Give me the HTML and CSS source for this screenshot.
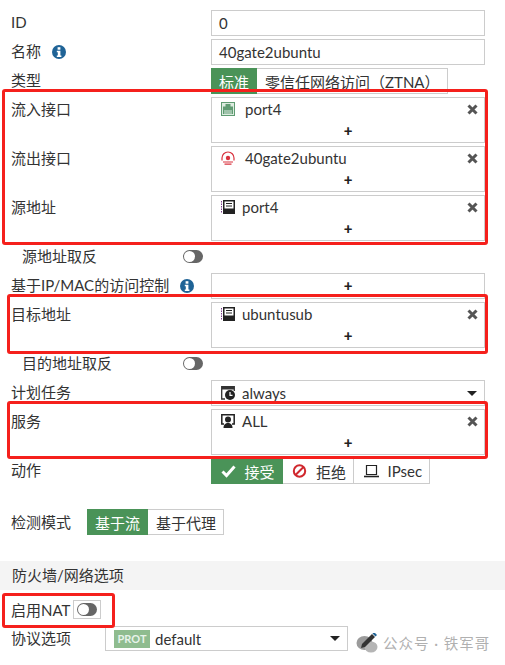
FILE: index.html
```html
<!DOCTYPE html>
<html lang="zh">

<head>
  <meta charset="UTF-8">
  <title>policy</title>
  <link rel="stylesheet" href="styles.css">
</head>

<body>
  <div class="form">
    <div class="row">
      <label class="name">ID</label>
      <div class="field text">0</div>
    </div>
    <div class="row">
      <label class="name">名称
        <svg class="info" viewBox="0 0 14 14"><circle cx="7" cy="7" r="7" fill="#1f6396"/><rect x="5.600" y="2.200" width="2.800" height="2.500" fill="#fff"/><path d="M4.800 5.800h3.600v4.600h1v1.500H4.800v-1.500h1V7.300H4.800z" fill="#fff"/></svg>
      </label>
      <div class="field text">40gate2ubuntu</div>
    </div>
    <div class="row">
      <label class="name">类型</label>
      <div class="btns">
        <span class="btn on">标准</span>
        <span class="btn">零信任网络访问（ZTNA）</span>
      </div>
    </div>

    <div class="row">
      <label class="name">流入接口</label>
      <div class="field multi">
        <div class="entry">
          <svg class="ico" viewBox="0 0 14 14"><rect x=".5" y=".5" width="13" height="13" fill="#dcebdf" stroke="#5f9b72"/><path d="M2 12V4.500h2.500V2h5v2.500H12V12z" fill="#5f9b72"/><path d="M4 8v4M6 8v4M8 8v4M10 8v4" stroke="#fff" stroke-width=".8"/></svg>
          <span class="val wide">port4</span>
          <svg class="x" viewBox="0 0 11 11"><path d="M1.500 1.500l8 8M9.500 1.500l-8 8" stroke="#555" stroke-width="3"/></svg>
        </div>
        <div class="plus">+</div>
      </div>
    </div>
    <div class="row">
      <label class="name">流出接口</label>
      <div class="field multi">
        <div class="entry">
          <svg class="ico" viewBox="0 0 14 14"><path d="M1 9.500V7a6 6 0 0 1 12 0v2.500" fill="none" stroke="#d9333f" stroke-width="1.200"/><circle cx="7" cy="7" r="2.200" fill="#d9333f"/><path d="M2 11h10M3.500 13.200h7" stroke="#d9333f" stroke-width="1.200"/></svg>
          <span class="val wide">40gate2ubuntu</span>
          <svg class="x" viewBox="0 0 11 11"><path d="M1.500 1.500l8 8M9.500 1.500l-8 8" stroke="#555" stroke-width="3"/></svg>
        </div>
        <div class="plus">+</div>
      </div>
    </div>
    <div class="row">
      <label class="name">源地址</label>
      <div class="field multi">
        <div class="entry">
          <svg class="ico" viewBox="0 0 14 14"><path d="M2 0h12v14H2z" fill="#222"/><path d="M3.500 1.500h9v7h-9z" fill="#fff"/><path d="M5 3.500h6M5 6h6" stroke="#222" stroke-width="1"/><path d="M.5 1v12" stroke="#7a3b8c" stroke-width="1" stroke-dasharray="1.500 1"/></svg>
          <span class="val">port4</span>
          <svg class="x" viewBox="0 0 11 11"><path d="M1.500 1.500l8 8M9.500 1.500l-8 8" stroke="#555" stroke-width="3"/></svg>
        </div>
        <div class="plus">+</div>
      </div>
    </div>

    <div class="row switch-row">
      <label class="name sub">源地址取反</label>
      <span class="toggle"></span>
    </div>
    <div class="row">
      <label class="name">基于IP/MAC的访问控制
        <svg class="info" viewBox="0 0 14 14"><circle cx="7" cy="7" r="7" fill="#1f6396"/><rect x="5.600" y="2.200" width="2.800" height="2.500" fill="#fff"/><path d="M4.800 5.800h3.600v4.600h1v1.500H4.800v-1.500h1V7.300H4.800z" fill="#fff"/></svg>
      </label>
      <div class="field plus-only"><div class="plus">+</div></div>
    </div>
    <div class="row">
      <label class="name">目标地址</label>
      <div class="field multi">
        <div class="entry">
          <svg class="ico" viewBox="0 0 14 14"><path d="M2 0h12v14H2z" fill="#222"/><path d="M3.500 1.500h9v7h-9z" fill="#fff"/><path d="M5 3.500h6M5 6h6" stroke="#222" stroke-width="1"/><path d="M.5 1v12" stroke="#7a3b8c" stroke-width="1" stroke-dasharray="1.500 1"/></svg>
          <span class="val">ubuntusub</span>
          <svg class="x" viewBox="0 0 11 11"><path d="M1.500 1.500l8 8M9.500 1.500l-8 8" stroke="#555" stroke-width="3"/></svg>
        </div>
        <div class="plus">+</div>
      </div>
    </div>
    <div class="row switch-row">
      <label class="name sub">目的地址取反</label>
      <span class="toggle"></span>
    </div>
    <div class="row">
      <label class="name">计划任务</label>
      <div class="field text select">
        <svg class="ico" viewBox="0 0 14 14"><path d="M4 13H.7V.7h12.600V5" fill="none" stroke="#333" stroke-width="1.300"/><path d="M1 1h12v2.500H1z" fill="#333"/><circle cx="9" cy="9" r="5" fill="#222"/><path d="M9 6v3.300h2.500" fill="none" stroke="#fff" stroke-width="1.200"/></svg>
        <span class="val">always</span><span class="caret"></span>
      </div>
    </div>
    <div class="row">
      <label class="name">服务</label>
      <div class="field multi">
        <div class="entry">
          <svg class="ico" viewBox="0 0 14 14"><path d="M3 10H.8V.8h12.400V10H11" fill="none" stroke="#222" stroke-width="1.500"/><circle cx="7" cy="5.500" r="3" fill="#222"/><path d="M2.500 14c0-3.500 2-5 4.500-5s4.500 1.500 4.500 5z" fill="#222"/></svg>
          <span class="val">ALL</span>
          <svg class="x" viewBox="0 0 11 11"><path d="M1.500 1.500l8 8M9.500 1.500l-8 8" stroke="#555" stroke-width="3"/></svg>
        </div>
        <div class="plus">+</div>
      </div>
    </div>

    <div class="row action-row">
      <label class="name">动作</label>
      <div class="btns">
        <span class="btn on icon-btn"><svg class="mark" viewBox="0 0 15 14"><path d="M1.500 7.500l4 4 8-9" fill="none" stroke="#fff" stroke-width="3"/></svg>接受</span>
        <span class="btn icon-btn"><svg class="mark" viewBox="0 0 15 14"><circle cx="7.500" cy="7" r="5.700" fill="none" stroke="#d0282e" stroke-width="2"/><path d="M3.500 11l8-8" stroke="#d0282e" stroke-width="2"/></svg>拒绝</span>
        <span class="btn icon-btn"><svg class="mark" viewBox="0 0 15 14"><path d="M2.500 1.500h10v9h-10z" fill="none" stroke="#222" stroke-width="1.200"/><path d="M0 12.500h15" stroke="#222" stroke-width="1.600"/></svg>IPsec</span>
      </div>
    </div>

    <div class="row mode-row">
      <label class="name short">检测模式</label>
      <div class="btns">
        <span class="btn on">基于流</span>
        <span class="btn">基于代理</span>
      </div>
    </div>

    <div class="section">防火墙/网络选项</div>

    <div class="row nat-row">
      <label class="name tight">启用NAT</label>
      <span class="toggle-box"><span class="toggle"></span></span>
    </div>
    <div class="row proto-row">
      <label class="name short">协议选项</label>
      <div class="field text select proto">
        <span class="prot">PROT</span>
        <span class="val">default</span><span class="caret"></span>
      </div>
    </div>
  </div>

  <div class="mark-box box-a"></div>
  <div class="mark-box box-b"></div>
  <div class="mark-box box-c"></div>
  <div class="mark-box box-d"></div>

  <div class="watermark">
    <svg class="wechat" viewBox="0 0 22 20"><ellipse cx="8.500" cy="10" rx="8" ry="7" fill="#9b9b9b"/><ellipse cx="15" cy="14" rx="6.500" ry="5.500" fill="#b5b5b5"/><path d="M6 11l-1 4 4-1L19 4l-3-3z" fill="#333"/><path d="M16.500 .5l3 3L21 2l-3-3z" fill="#1f6396"/></svg>
    <span>公众号 · 铁军哥</span>
  </div>
</body>

</html>
```

FILE: styles.css
```css
html, body {
  margin: 0;
  padding: 0;
  background: #fff;
}

body {
  position: relative;
  width: 505px;
  height: 665px;
  overflow: hidden;
  font-family: Lato, "Noto Sans CJK SC", sans-serif;
  font-size: 15px;
  color: #333;
}

.form {
  padding-top: 10px;
}

.row {
  display: flex;
  margin-bottom: 3px;
}

.name {
  display: block;
  flex: none;
  box-sizing: border-box;
  width: 211px;
  padding-left: 11px;
  line-height: 24px;
  white-space: nowrap;
}

.name.sub {
  padding-left: 22px;
}

.name.short {
  width: 87px;
}

.name.tight {
  width: 73px;
}

.info {
  width: 14px;
  height: 14px;
  margin-left: 7px;
  vertical-align: -2px;
}

.field {
  box-sizing: border-box;
  width: 274px;
  border: 1px solid #ccc;
  background: #fff;
}

.text {
  display: flex;
  align-items: center;
  height: 26px;
  padding-left: 7px;
}

.multi {
  height: 46px;
}

.entry {
  display: flex;
  align-items: center;
  height: 22px;
  padding-left: 9px;
}

.ico {
  flex: none;
  width: 14px;
  height: 14px;
}

.val {
  margin-left: 7px;
}

.val.wide {
  margin-left: 10px;
}

.x {
  flex: none;
  width: 11px;
  height: 11px;
  margin-left: auto;
  margin-right: 6px;
}

.plus {
  height: 21px;
  line-height: 21px;
  text-align: center;
  font-weight: 900;
  color: #222;
}

.plus-only .plus {
  height: 24px;
  line-height: 23px;
}

.select {
  padding-left: 9px;
}

.caret {
  margin-left: auto;
  margin-right: 7px;
  border-top: 5px solid #222;
  border-left: 5px solid transparent;
  border-right: 5px solid transparent;
}

.btns {
  display: flex;
}

.btn {
  display: flex;
  align-items: center;
  box-sizing: border-box;
  height: 26px;
  padding: 0 7px 0 8px;
  border: 1px solid #ccc;
  border-left: 0;
  white-space: nowrap;
}

.btn.on {
  background: #4a9358;
  border-color: #4a9358;
  color: #fff;
}

.icon-btn {
  padding: 0 7px 0 9.5px;
}

.mark {
  flex: none;
  width: 15px;
  height: 14px;
  margin-right: 9px;
}

.switch-row {
  align-items: center;
  box-sizing: border-box;
  height: 26px;
  padding-bottom: 2px;
}

.name.sub + .toggle {
  margin-left: -28px;
}

.toggle {
  position: relative;
  display: block;
  flex: none;
  box-sizing: border-box;
  width: 20px;
  height: 13px;
  border-radius: 7px;
  background: #666;
}

.toggle::before {
  content: "";
  position: absolute;
  left: 1px;
  top: 1px;
  width: 11px;
  height: 11px;
  border-radius: 50%;
  background: #fff;
}

.action-row {
  margin-bottom: 25px;
}

.mode-row {
  margin-bottom: 26px;
}

.mode-row .name {
  line-height: 26px;
}

.section {
  height: 29px;
  padding-left: 12px;
  line-height: 29px;
  background: #f4f4f4;
}

.nat-row {
  align-items: center;
  height: 19px;
  margin: 10px 0 7px;
}

.toggle-box {
  display: flex;
  align-items: center;
  justify-content: center;
  box-sizing: border-box;
  width: 28px;
  height: 19px;
  border: 1px solid #ccc;
}

.proto-row .name {
  width: 105px;
}

.proto {
  width: 243px;
  height: 25px;
  padding-left: 8px;
}

.prot {
  flex: none;
  width: 36px;
  height: 18px;
  line-height: 18px;
  text-align: center;
  font-size: 11px;
  font-weight: 700;
  color: #e8f3ea;
  background: #8fbc8f;
}

.proto .val {
  margin-left: 5px;
}

.mark-box {
  position: absolute;
  box-sizing: border-box;
  border: 3px solid #f5201c;
  border-radius: 3px;
}

.box-a {
  left: 2px;
  top: 89px;
  width: 486px;
  height: 156px;
}

.box-b {
  left: 7px;
  top: 294px;
  width: 481px;
  height: 60px;
}

.box-c {
  left: 7px;
  top: 401px;
  width: 481px;
  height: 58px;
}

.box-d {
  left: 2px;
  top: 593px;
  width: 113px;
  height: 35px;
}

.watermark {
  position: absolute;
  left: 356px;
  top: 632px;
  display: flex;
  align-items: center;
  gap: 5px;
  font-size: 14.5px;
  letter-spacing: 1px;
  color: #b0b0b0;
  white-space: nowrap;
}

.wechat {
  width: 22px;
  height: 20px;
}
```
